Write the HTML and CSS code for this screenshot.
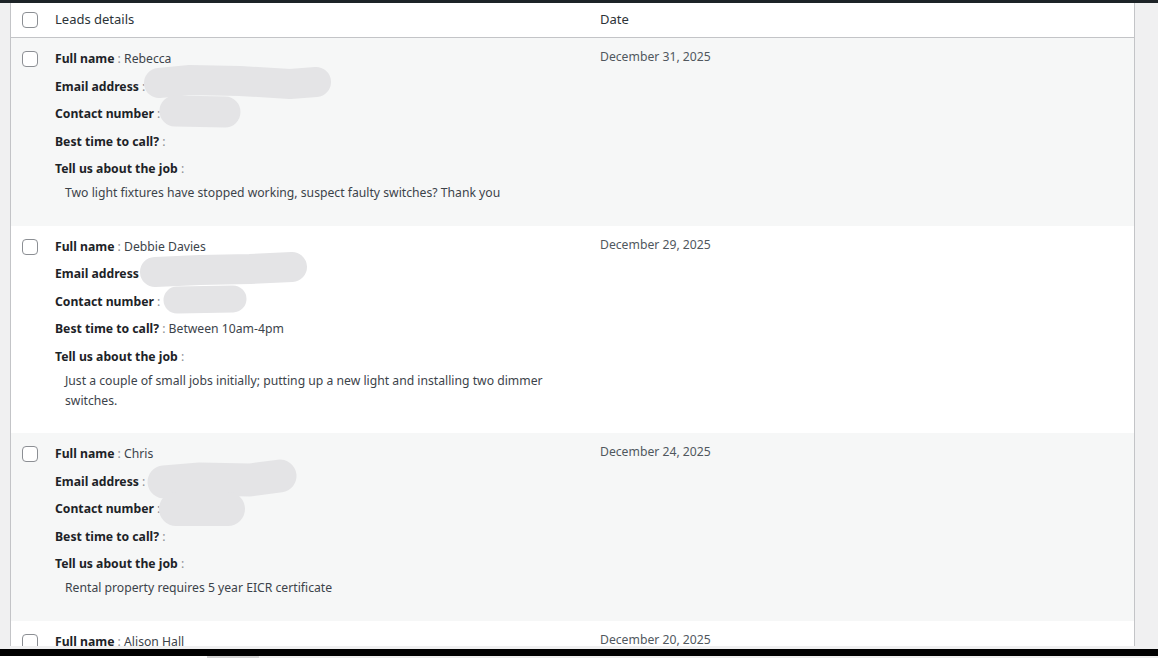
FILE: index.html
```html
<!DOCTYPE html>
<html lang="en">
<head>
<meta charset="utf-8">
<title>Leads</title>
<link rel="stylesheet" href="styles.css">
</head>
<body>
<div class="adminbar"></div>
<div class="wrap">
  <div class="table">
    <div class="row head">
      <div class="cb"><span class="box"></span></div>
      <div class="details">Leads details</div>
      <div class="date">Date</div>
    </div>

    <div class="row alt">
      <svg class="redact" width="400" height="100" viewBox="0 0 400 100">
        <polyline points="148,45 179,42 229,43 279,46 305,44"/>
        <polyline points="164,73 214,74" class="c31"/>
      </svg>
      <div class="cb"><span class="box"></span></div>
      <div class="details">
        <div class="field"><b>Full name</b> <span class="colon">:</span> Rebecca</div>
        <div class="field"><b>Email address</b> <span class="colon">:</span></div>
        <div class="field"><b>Contact number</b> <span class="colon">:</span></div>
        <div class="field"><b>Best time to call?</b> <span class="colon">:</span></div>
        <div class="field last"><b>Tell us about the job</b> <span class="colon">:</span></div>
        <div class="desc">Two light fixtures have stopped working, suspect faulty switches? Thank you</div>
      </div>
      <div class="date">December 31, 2025</div>
    </div>

    <div class="row">
      <svg class="redact" width="400" height="100" viewBox="0 0 400 100">
        <polyline points="144,46 189,44 239,43 281,41"/>
        <polyline points="166,74 222,73" class="c27"/>
      </svg>
      <div class="cb"><span class="box"></span></div>
      <div class="details">
        <div class="field"><b>Full name</b> <span class="colon">:</span> Debbie Davies</div>
        <div class="field"><b>Email address</b> <span class="colon">:</span></div>
        <div class="field"><b>Contact number</b> <span class="colon">:</span></div>
        <div class="field"><b>Best time to call?</b> <span class="colon">:</span> Between 10am-4pm</div>
        <div class="field last"><b>Tell us about the job</b> <span class="colon">:</span></div>
        <div class="desc">Just a couple of small jobs initially; putting up a new light and installing two dimmer switches.</div>
      </div>
      <div class="date">December 29, 2025</div>
    </div>

    <div class="row alt">
      <svg class="redact" width="400" height="100" viewBox="0 0 400 100">
        <polyline points="153,49 189,46 239,47 269,43" class="c33"/>
        <polyline points="165,76 217,76" class="c34"/>
      </svg>
      <div class="cb"><span class="box"></span></div>
      <div class="details">
        <div class="field"><b>Full name</b> <span class="colon">:</span> Chris</div>
        <div class="field"><b>Email address</b> <span class="colon">:</span></div>
        <div class="field"><b>Contact number</b> <span class="colon">:</span></div>
        <div class="field"><b>Best time to call?</b> <span class="colon">:</span></div>
        <div class="field last"><b>Tell us about the job</b> <span class="colon">:</span></div>
        <div class="desc">Rental property requires 5 year EICR certificate</div>
      </div>
      <div class="date">December 24, 2025</div>
    </div>

    <div class="row">
      <div class="cb"><span class="box"></span></div>
      <div class="details">
        <div class="field"><b>Full name</b> <span class="colon">:</span> Alison Hall</div>
      </div>
      <div class="date">December 20, 2025</div>
    </div>
  </div>
</div>
<div class="bottombar"></div>
<div class="taskstrip"><span class="ts1"></span><span class="ts2"></span><span class="ts3"></span></div>
</body>
</html>
```

FILE: styles.css
```css
html, body {
  margin: 0;
  padding: 0;
}
body {
  width: 1158px;
  height: 658px;
  overflow: hidden;
  background: #f0f0f1;
  font-family: "Noto Sans", "Open Sans", sans-serif;
  font-size: 12.2px;
  color: #3c434a;
  display: flex;
  flex-direction: column;
}
.adminbar {
  height: 3px;
  background: #1d2327;
  flex: none;
}
.wrap {
  height: 643px;
  padding: 0 23px 0 10px;
  flex: none;
  overflow: hidden;
}
.table {
  border-left: 1px solid #c3c4c7;
  border-right: 1px solid #c3c4c7;
  background: #fff;
  height: 643px;
  overflow: hidden;
}
.row {
  position: relative;
  display: grid;
  grid-template-columns: 44px 535px 1fr;
  background: #fff;
}
.row.alt {
  background: #f6f7f7;
}
.row.head {
  height: 34px;
  border-bottom: 1px solid #c3c4c7;
  font-size: 13px;
  color: #2c3338;
}
.row.head .cb {
  padding-top: 9px;
}
.row.head .details {
  padding: 6px 0 0 0;
  line-height: 20px;
}
.row.head .date {
  padding-top: 6px;
  color: #2c3338;
}
.cb {
  padding: 13px 0 0 11px;
}
.box {
  display: block;
  width: 14px;
  height: 14px;
  border: 1px solid #8c8f94;
  border-radius: 4px;
  background: #fff;
}
.details {
  padding: 11px 0 22.5px 0;
}
.field {
  line-height: 20px;
  height: 20px;
  margin-bottom: 7.5px;
  color: #3c434a;
}
.field.last {
  margin-bottom: 4px;
}
.field b {
  font-weight: 700;
  color: #1d2327;
}
.colon {
  color: #8c8f94;
  line-height: 0;
}
.desc {
  padding-left: 10px;
  line-height: 20px;
  color: #3c434a;
}
.date {
  padding: 9px 0 0 10px;
  line-height: 20px;
  color: #50575e;
}
.redact {
  position: absolute;
  top: 0;
  left: 0;
  pointer-events: none;
}
.redact polyline {
  fill: none;
  stroke: #e4e4e6;
  stroke-width: 30;
  stroke-linecap: round;
  stroke-linejoin: round;
}
.redact polyline.c27 { stroke-width: 27; }
.redact polyline.c31 { stroke-width: 31; }
.redact polyline.c33 { stroke-width: 33; }
.redact polyline.c34 { stroke-width: 34; }
.bottombar {
  margin-top: 3px;
  height: 7px;
  background: #000;
  flex: none;
}
.taskstrip {
  display: flex;
  height: 2px;
  flex: none;
}
.ts1 { width: 207px; background: #fff; }
.ts2 { width: 52px; background: #d4d4d4; }
.ts3 { flex: 1; background: #eeeeee; }
```
